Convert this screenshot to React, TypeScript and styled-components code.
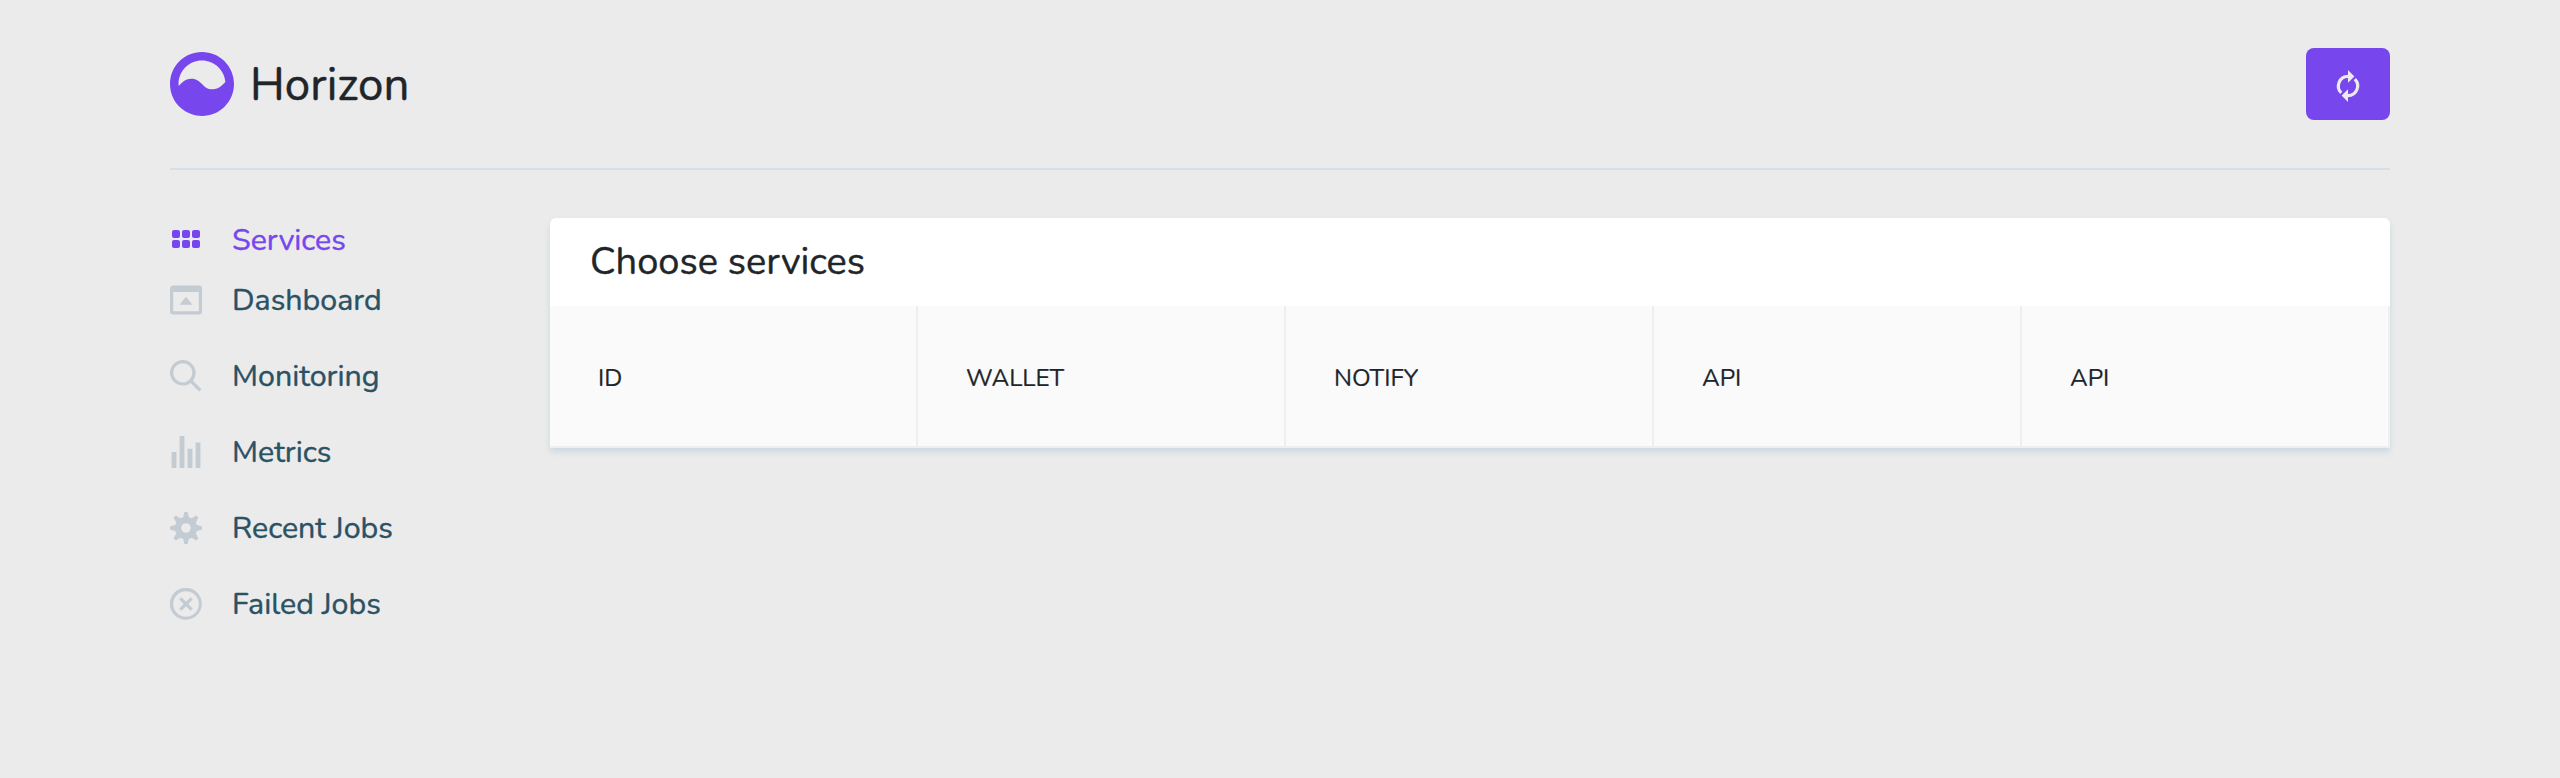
import React from 'react';
import styled, { createGlobalStyle } from 'styled-components';

const GlobalStyle = createGlobalStyle`
  *, *::before, *::after { box-sizing: border-box; }
  body {
    margin: 0;
    min-height: 778px;
    background: #ebebeb;
    color: #212529;
    font-family: Nunito, Lato, sans-serif;
  }
`;

const Container = styled.div`
  padding: 0 170px;
`;

const Header = styled.header`
  display: flex;
  align-items: center;
  height: 170px;
  border-bottom: 2px solid #d5dfe9;
`;

const LogoMark = styled.svg`
  width: 64px;
  height: 64px;
  fill: #7746ec;
`;

const Brand = styled.h4`
  margin: 0 auto 0 16px;
  padding-top: 2px;
  font-size: 45.6px;
  font-weight: 400;
  line-height: 54px;
  letter-spacing: 0.1px;
  -webkit-text-stroke: 0.5px currentColor;
`;

const RefreshButton = styled.button`
  display: flex;
  align-items: center;
  justify-content: center;
  width: 84px;
  height: 72px;
  padding: 4px 0 0;
  border: 0;
  border-radius: 8px;
  background: #7746ec;
`;

const ButtonIcon = styled.svg`
  width: 32px;
  height: 32px;
  fill: #ebebeb;
`;

const Body = styled.div`
  display: flex;
  align-items: flex-start;
  padding-top: 48px;
`;

const Sidebar = styled.ul`
  width: 380px;
  flex: none;
  margin: 0;
  padding: 0;
  list-style: none;
`;

const NavItem = styled.li<{ $active?: boolean }>`
  display: flex;
  align-items: center;
  height: ${(p) => (p.$active ? 44 : 76)}px;
  color: ${(p) => (p.$active ? '#7746ec' : '#2a5164')};
  fill: ${(p) => (p.$active ? '#7746ec' : '#c3cbd3')};
`;

const NavIcon = styled.svg`
  width: 32px;
  height: 32px;
  margin-right: 30px;
`;

const NavLabel = styled.span`
  font-size: 30.4px;
  line-height: 42px;
  -webkit-text-stroke: 0.4px currentColor;
`;

const Card = styled.section`
  flex: 1;
  border-radius: 6px 6px 0 0;
  background: #fff;
  box-shadow: 0 4px 6px #cdd8df;
`;

const CardHeader = styled.div`
  display: flex;
  align-items: center;
  height: 88px;
  padding: 0 40px 1px;
  border-radius: inherit;
`;

const CardTitle = styled.h5`
  margin: 0;
  font-size: 38px;
  font-weight: 400;
  line-height: 51px;
  -webkit-text-stroke: 0.4px currentColor;
`;

const ServiceGrid = styled.div`
  display: grid;
  grid-template-columns: repeat(5, 1fr);
`;

const ServiceCell = styled.div`
  display: flex;
  align-items: center;
  height: 142px;
  padding: 4px 0 0 48px;
  border-right: 2px solid #efefef;
  border-bottom: 2px solid #efefef;
  background: #fafafa;
  font-size: 24.32px;
  line-height: 34px;
  -webkit-text-stroke: 0.2px currentColor;
`;

const GRID_X = [1.25, 7.5, 13.75];
const GRID_Y = [3.75, 10];

const gridIcon = (
  <>
    {GRID_Y.map((y) =>
      GRID_X.map((x) => <rect key={`${x}-${y}`} x={x} y={y} width="5" height="5" rx="1.3" />),
    )}
  </>
);

const navItems = [
  { label: 'Services', active: true, icon: gridIcon },
  {
    label: 'Dashboard',
    icon: <path d="M0 3c0-1.1.9-2 2-2h16a2 2 0 0 1 2 2v14a2 2 0 0 1-2 2H2a2 2 0 0 1-2-2V3zm2 2v12h16V5H2zm8 3l4 5H6l4-5z" />,
  },
  {
    label: 'Monitoring',
    icon: <path d="M12.9 14.32a8 8 0 1 1 1.41-1.41l5.35 5.33-1.42 1.42-5.33-5.34zM8 14A6 6 0 1 0 8 2a6 6 0 0 0 0 12z" />,
  },
  {
    label: 'Metrics',
    icon: <path d="M1 10h3v10H1V10zM6 0h3v20H6V0zm5 8h3v12h-3V8zm5-4h3v16h-3V4z" />,
  },
  {
    label: 'Recent Jobs',
    icon: <path d="M3.94 6.5L2.22 3.64l1.42-1.42L6.5 3.94c.52-.3 1.1-.54 1.7-.7L9 0h2l.8 3.24c.6.16 1.18.4 1.7.7l2.86-1.72 1.42 1.42-1.72 2.86c.3.52.54 1.1.7 1.7L20 9v2l-3.24.8c-.16.6-.4 1.18-.7 1.7l1.72 2.86-1.42 1.42-2.86-1.72c-.52.3-1.1.54-1.7.7L11 20H9l-.8-3.24c-.6-.16-1.18-.4-1.7-.7l-2.86 1.72-1.42-1.42 1.72-2.86c-.3-.52-.54-1.1-.7-1.7L0 11V9l3.24-.8c.16-.6.4-1.18.7-1.7zM10 13a3 3 0 1 0 0-6 3 3 0 0 0 0 6z" />,
  },
  {
    label: 'Failed Jobs',
    icon: <path d="M2.93 17.07A10 10 0 1 1 17.07 2.93 10 10 0 0 1 2.93 17.07zm1.41-1.41A8 8 0 1 0 15.66 4.34 8 8 0 0 0 4.34 15.66zm9.9-8.49L11.41 10l2.83 2.83-1.41 1.41L10 11.41l-2.83 2.83-1.41-1.41L8.59 10 5.76 7.17l1.41-1.41L10 8.59l2.83-2.83 1.41 1.41z" />,
  },
];

const services = ['ID', 'WALLET', 'NOTIFY', 'API', 'API'];

export default function App() {
  return (
    <Container>
      <GlobalStyle />
      <Header>
        <LogoMark viewBox="0 0 30 30">
          <path d="M5.26176342 26.4094389C2.04147988 23.6582233 0 19.5675182 0 15c0-4.1421356 1.67893219-7.89213562 4.39339828-10.60660172C7.10786438 1.67893219 10.8578644 0 15 0c8.2842712 0 15 6.71572875 15 15 0 8.2842712-6.7157288 15-15 15-3.716753 0-7.11777662-1.3517984-9.73823658-3.5905611zM4.03811305 15.9222506C5.70084247 14.4569342 6.87195416 12.5 10 12.5c5 0 5 5 10 5 3.1280454 0 4.2991572-1.9569336 5.961887-3.4222502C25.4934253 8.43417206 20.7645408 4 15 4 8.92486775 4 4 8.92486775 4 15c0 .3105915.01287248.6181765.03811305.9222506z" />
        </LogoMark>
        <Brand>Horizon</Brand>
        <RefreshButton aria-label="Refresh">
          <ButtonIcon viewBox="0 0 20 20">
            <path d="M10 3v2a5 5 0 0 0-3.54 8.54l-1.41 1.41A7 7 0 0 1 10 3zm4.95 2.05A7 7 0 0 1 10 17v-2a5 5 0 0 0 3.54-8.54l1.41-1.41zM10 20l-4-4 4-4v8zm0-12V0l4 4-4 4z" />
          </ButtonIcon>
        </RefreshButton>
      </Header>
      <Body>
        <Sidebar>
          {navItems.map((item) => (
            <NavItem key={item.label} $active={item.active}>
              <NavIcon viewBox="0 0 20 20">{item.icon}</NavIcon>
              <NavLabel>{item.label}</NavLabel>
            </NavItem>
          ))}
        </Sidebar>
        <Card>
          <CardHeader>
            <CardTitle>Choose services</CardTitle>
          </CardHeader>
          <ServiceGrid>
            {services.map((name, index) => (
              <ServiceCell key={index}>{name}</ServiceCell>
            ))}
          </ServiceGrid>
        </Card>
      </Body>
    </Container>
  );
}
